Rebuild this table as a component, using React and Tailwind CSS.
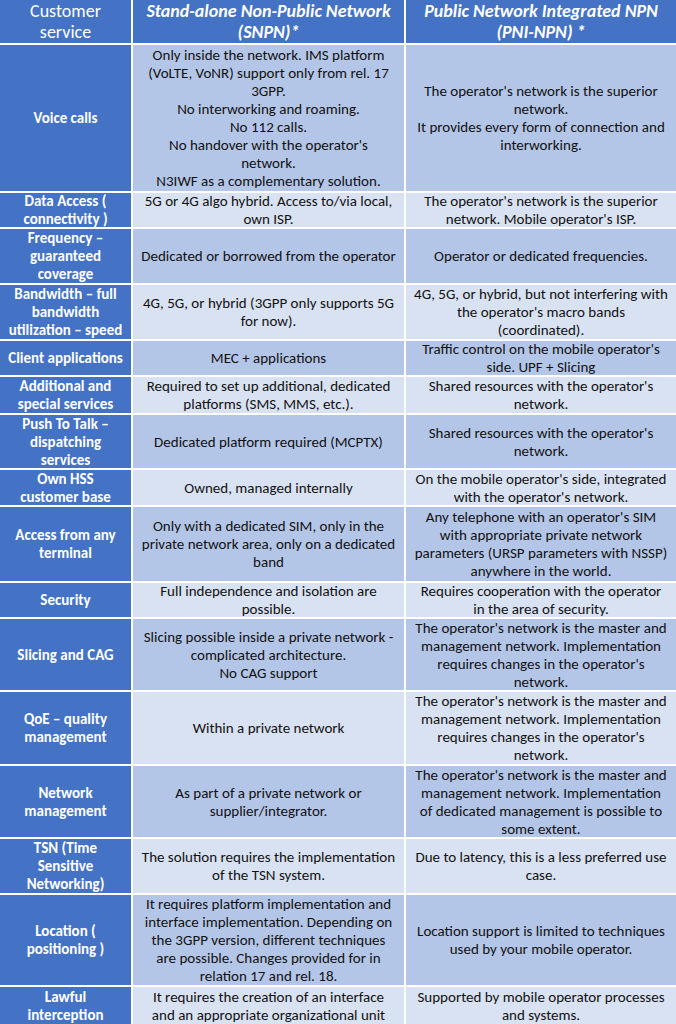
import React from "react";

const rows = [
  { h: 146, dark: true, a: ["Voice calls"], b: ["Only inside the network. IMS platform", "(VoLTE, VoNR) support only from rel. 17", "3GPP.", "No interworking and roaming.", "No 112 calls.", "No handover with the operator's", "network.", "N3IWF as a complementary solution."], c: ["The operator's network is the superior", "network.", "It provides every form of connection and", "interworking."] },
  { h: 34, dark: false, a: ["Data Access (", "connectivity )"], b: ["5G or 4G algo hybrid. Access to/via local,", "own ISP."], c: ["The operator's network is the superior", "network. Mobile operator's ISP."] },
  { h: 54, dark: true, a: ["Frequency –", "guaranteed", "coverage"], b: ["Dedicated or borrowed from the operator"], c: ["Operator or dedicated frequencies."] },
  { h: 54, dark: false, a: ["Bandwidth – full", "bandwidth", "utilization – speed"], b: ["4G, 5G, or hybrid (3GPP only supports 5G", "for now)."], c: ["4G, 5G, or hybrid, but not interfering with", "the operator's macro bands", "(coordinated)."] },
  { h: 34, dark: true, a: ["Client applications"], b: ["MEC + applications"], c: ["Traffic control on the mobile operator's", "side. UPF + Slicing"] },
  { h: 36, dark: false, a: ["Additional and", "special services"], b: ["Required to set up additional, dedicated", "platforms (SMS, MMS, etc.)."], c: ["Shared resources with the operator's", "network."] },
  { h: 53, dark: true, a: ["Push To Talk –", "dispatching", "services"], b: ["Dedicated platform required (MCPTX)"], c: ["Shared resources with the operator's", "network."] },
  { h: 35, dark: false, a: ["Own HSS", "customer base"], b: ["Owned, managed internally"], c: ["On the mobile operator's side, integrated", "with the operator's network."] },
  { h: 74, dark: true, a: ["Access from any", "terminal"], b: ["Only with a dedicated SIM, only in the", "private network area, only on a dedicated", "band"], c: ["Any telephone with an operator's SIM", "with appropriate private network", "parameters (URSP parameters with NSSP)", "anywhere in the world."] },
  { h: 34, dark: false, a: ["Security"], b: ["Full independence and isolation are", "possible."], c: ["Requires cooperation with the operator", "in the area of security."] },
  { h: 71, dark: true, a: ["Slicing and CAG"], b: ["Slicing possible inside a private network -", "complicated architecture.", "No CAG support"], c: ["The operator's network is the master and", "management network. Implementation", "requires changes in the operator's", "network."] },
  { h: 72, dark: false, a: ["QoE – quality", "management"], b: ["Within a private network"], c: ["The operator's network is the master and", "management network. Implementation", "requires changes in the operator's", "network."] },
  { h: 71, dark: true, a: ["Network", "management"], b: ["As part of a private network or", "supplier/integrator."], c: ["The operator's network is the master and", "management network. Implementation", "of dedicated management is possible to", "some extent."] },
  { h: 54, dark: false, a: ["TSN (Time", "Sensitive", "Networking)"], b: ["The solution requires the implementation", "of the TSN system."], c: ["Due to latency, this is a less preferred use", "case."] },
  { h: 90, dark: true, a: ["Location (", "positioning )"], b: ["It requires platform implementation and", "interface implementation. Depending on", "the 3GPP version, different techniques", "are possible. Changes provided for in", "relation 17 and rel. 18."], c: ["Location support is limited to techniques", "used by your mobile operator."] },
  { h: 37, dark: false, a: ["Lawful", "interception"], b: ["It requires the creation of an interface", "and an appropriate organizational unit"], c: ["Supported by mobile operator processes", "and systems."] },
];

function Lines({ lines }) {
  return (
    <div className="whitespace-nowrap">
      {lines.map((l, i) => (
        <div key={i}>{l}</div>
      ))}
    </div>
  );
}

export default function App() {
  return (
    <div
      className="w-[676px] h-[1024px] overflow-hidden bg-white"
      style={{ fontFamily: "Carlito, Lato, 'Liberation Sans', sans-serif" }}
    >
      <div className="grid grid-cols-[131px_271px_1fr] gap-[2px] bg-white">
        <div className="h-[43px] bg-[#4472C4] text-white text-[18px] leading-[21px] flex items-center justify-center text-center">
          <Lines lines={["Customer", "service"]} />
        </div>
        <div className="h-[43px] bg-[#4472C4] text-white text-[18px] leading-[21px] font-bold italic flex items-center justify-center text-center">
          <Lines lines={["Stand-alone Non-Public Network", "(SNPN)*"]} />
        </div>
        <div className="h-[43px] bg-[#4472C4] text-white text-[18px] leading-[21px] font-bold italic flex items-center justify-center text-center">
          <Lines lines={["Public Network Integrated NPN", "(PNI-NPN) *"]} />
        </div>
        {rows.map((r, i) => {
          const bg = r.dark ? "bg-[#B4C6E7]" : "bg-[#D9E2F3]";
          return (
            <React.Fragment key={i}>
              <div
                className="bg-[#4472C4] text-white font-bold text-[15px] leading-[18px] flex items-center justify-center text-center"
                style={{ height: r.h }}
              >
                <Lines lines={r.a} />
              </div>
              <div
                className={`${bg} text-[#111111] text-[15px] leading-[18px] flex items-center justify-center text-center`}
                style={{ height: r.h }}
              >
                <Lines lines={r.b} />
              </div>
              <div
                className={`${bg} text-[#111111] text-[15px] leading-[18px] flex items-center justify-center text-center`}
                style={{ height: r.h }}
              >
                <Lines lines={r.c} />
              </div>
            </React.Fragment>
          );
        })}
      </div>
    </div>
  );
}
